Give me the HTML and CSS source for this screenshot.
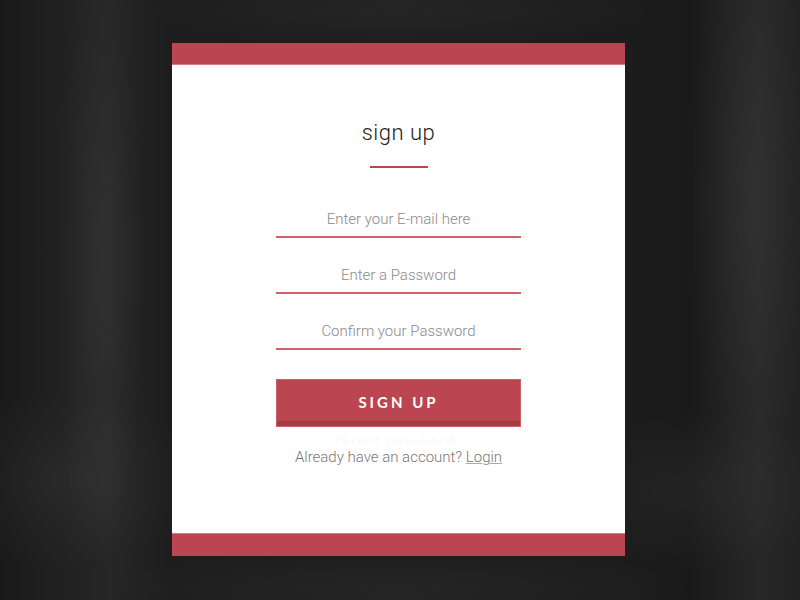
FILE: index.html
```html
<!DOCTYPE html>
<html lang="en">

<head>
    <meta charset="UTF-8">
    <meta name="viewport" content="width=device-width, initial-scale=1.0">
    <title>Sign up</title>
    <link rel="stylesheet" href="styles.css">
</head>

<body>

    <div class="card">
        <div class="bar"></div>
        <div class="content">
            <h1>sign up</h1>
            <div class="rule"></div>
            <form class="form">
                <input type="email" placeholder="Enter your E-mail here">
                <input type="password" placeholder="Enter a Password">
                <input type="password" placeholder="Confirm your Password">
                <button type="button">SIGN UP</button>
            </form>
            <p class="forgot">Forgot password?</p>
            <p class="login">Already have an account? <a href="#">Login</a></p>
        </div>
        <div class="bar bar-bottom"></div>
    </div>

</body>

</html>
```

FILE: styles.css
```css
* {
    margin: 0;
    padding: 0;
    box-sizing: border-box;
}

html,
body {
    height: 100%;
}

body {
    background-color: #1b1b1b;
    background-image:
        radial-gradient(ellipse 45px 320px at 100px 260px, rgba(255,255,255,0.05), rgba(255,255,255,0)),
        radial-gradient(ellipse 140px 90px at 60px 480px, rgba(255,255,255,0.04), rgba(255,255,255,0)),
        radial-gradient(ellipse 130px 80px at 700px 490px, rgba(255,255,255,0.04), rgba(255,255,255,0)),
        radial-gradient(ellipse 60px 300px at 750px 200px, rgba(255,255,255,0.05), rgba(255,255,255,0)),
        radial-gradient(ellipse 260px 40px at 400px 10px, rgba(255,255,255,0.04), rgba(255,255,255,0)),
        radial-gradient(ellipse 300px 45px at 400px 590px, rgba(255,255,255,0.04), rgba(255,255,255,0)),
        linear-gradient(90deg, #1a1a1a 0, #262626 110px, #1d1d1d 170px, #1c1c1c 640px, #1a1a1a 690px, #272727 760px, #222 800px);
    font-family: Roboto, "Liberation Sans", sans-serif;
    overflow: hidden;
    padding-top: 43px;
}

.card {
    width: 453px;
    height: 513px;
    margin-left: 172px;
    background: #fff;
    display: flex;
    flex-direction: column;
}

.bar {
    height: 22px;
    background: #bb4550;
    border-bottom: 1px solid #d37b83;
}

.bar-bottom {
    height: 23px;
    margin-top: auto;
    border-bottom: none;
    border-top: 1px solid #d37b83;
}

.content {
    display: flex;
    flex-direction: column;
    align-items: center;
    padding-top: 53px;
}

h1 {
    font-size: 22px;
    font-weight: 300;
    line-height: 30px;
    color: #222;
    letter-spacing: 0.5px;
}

.rule {
    width: 58px;
    height: 2px;
    background: #c0444f;
    margin-top: 18px;
}

.form {
    width: 245px;
    margin-top: 32px;
    display: flex;
    flex-direction: column;
}

.form input {
    height: 38px;
    border: none;
    border-bottom: 2px solid #d0606a;
    outline: none;
    text-align: center;
    font-family: Roboto, "Liberation Sans", sans-serif;
    font-size: 15px;
    font-weight: 300;
    color: #555;
    padding-top: 2px;
}

.form input + input {
    margin-top: 18px;
}

.form input::placeholder {
    color: #8a8a8a;
}

.form button {
    margin-top: 29px;
    height: 48px;
    border: 1px solid #c7626b;
    background: #bb4550;
    box-shadow: inset 0 -5px 0 #a53d47;
    color: #fff;
    font-family: Lato, "Open Sans", sans-serif;
    font-weight: 700;
    font-size: 15px;
    letter-spacing: 3px;
    padding-bottom: 2px;
    cursor: pointer;
}

.forgot {
    margin-top: 6px;
    font-family: Lato, "Open Sans", sans-serif;
    font-size: 12px;
    line-height: 14px;
    font-weight: 700;
    letter-spacing: 2.2px;
    color: #fafafa;
}

.login {
    margin-top: 1px;
    font-size: 15px;
    line-height: 18px;
    font-weight: 300;
    color: #777;
}

.login a {
    color: #777;
    text-decoration: underline;
    text-decoration-color: #aaa;
}
```
